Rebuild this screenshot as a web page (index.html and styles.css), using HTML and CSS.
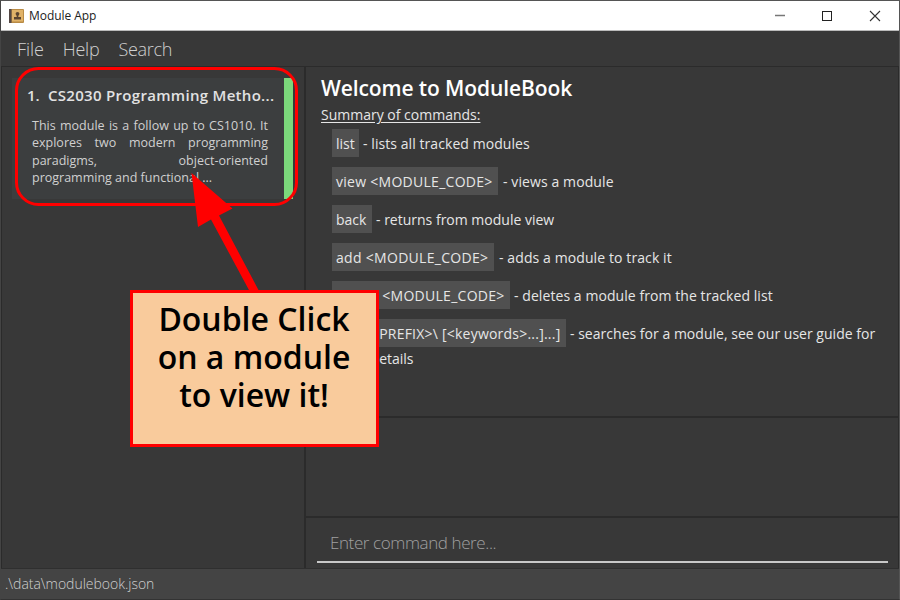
FILE: index.html
```html
<!DOCTYPE html>
<html lang="en">
<head>
<meta charset="utf-8">
<title>Module App</title>
<link rel="stylesheet" href="styles.css">
</head>
<body>
<div class="window">
  <header class="titlebar">
    <svg class="app-icon" width="15" height="14" viewBox="0 0 15 14">
      <rect width="15" height="14" rx="1" fill="#b98b45"/>
      <rect x="3" y="1" width="11" height="11.5" fill="#e0b268"/>
      <rect width="2.5" height="14" fill="#534744"/>
      <circle cx="8.500" cy="4.800" r="1.900" fill="#5b4430"/>
      <path d="M7.700 6h1.600v2H12v2.500H5V8h2.700z" fill="#5b4430"/>
    </svg>
    <span class="app-name">Module App</span>
    <svg class="controls" width="102" height="12" viewBox="0 0 102 12" fill="none">
      <path d="M0 5.500h10" stroke="#777" stroke-width="1.500"/>
      <rect x="47.500" y="1.500" width="9" height="9" stroke="#222"/>
      <path d="M95 1l10 10M105 1l-10 10" stroke="#333" stroke-width="1.100"/>
    </svg>
  </header>
  <nav class="menu"><span class="m-file">File</span><span class="m-help">Help</span><span class="m-search">Search</span></nav>
  <main class="content">
    <aside class="sidebar">
      <article class="card">
        <h2><span class="index">1.</span><span class="card-title">CS2030 Programming Metho...</span></h2>
        <div class="summary">
          <p>This module is a follow up to CS1010. It</p>
          <p>explores two modern programming</p>
          <p>paradigms, object-oriented</p>
          <p class="last">programming and functional ...</p>
        </div>
      </article>
    </aside>
    <section class="right">
      <div class="welcome">
        <h1><span>Welcome to ModuleBook</span></h1>
        <div class="subtitle"><span>Summary of commands:</span></div>
        <ul class="commands">
          <li><code class="c-list">list</code><span class="d-list">- lists all tracked modules</span></li>
          <li><code class="c-view">view &lt;MODULE_CODE&gt;</code><span class="d-view">- views a module</span></li>
          <li><code class="c-back">back</code><span class="d-back">- returns from module view</span></li>
          <li><code class="c-add">add &lt;MODULE_CODE&gt;</code><span class="d-add">- adds a module to track it</span></li>
          <li><code class="c-delete">delete &lt;MODULE_CODE&gt;</code><span class="d-delete">- deletes a module from the tracked list</span></li>
          <li><code class="c-find">find [&lt;PREFIX&gt;\ [&lt;keywords&gt;...]...]</code><span class="d-find">- searches for a module, see our user guide for</span></li>
        </ul>
        <div class="more"><span>more details</span></div>
      </div>
      <div class="result"></div>
      <div class="command"><div class="field"><span>Enter command here...</span></div></div>
    </section>
  </main>
  <footer class="status"><span>.\data\modulebook.json</span></footer>
  <svg class="annotation" width="900" height="600" viewBox="0 0 900 600">
    <rect x="16.500" y="68.500" width="280" height="136" rx="22" fill="none" stroke="#f00" stroke-width="3"/>
    <path d="M191.500 173L232.500 208.500L219 215.500L259 291H249.500L211 219.500L198 227Z" fill="#f00"/>
  </svg>
  <div class="callout"><span class="l1">Double Click</span><span class="l2">on a module</span><span class="l3">to view it!</span></div>
</div>
</body>
</html>
```
FILE: styles.css
```css
* { box-sizing: border-box; }
body { margin: 0; font-family: "Open Sans", "Noto Sans", sans-serif; }
h1, h2, p, ul { margin: 0; padding: 0; }
span, code { white-space: pre; }
.window { position: relative; width: 900px; height: 600px; overflow: hidden; display: flex; flex-direction: column; background: #383838; border: 1px solid #555; border-bottom-color: #333; border-left-color: #444; }
.titlebar { height: 30px; background: #fff; border-bottom: 1px solid #bbb; display: flex; align-items: center; padding: 0 18px 0 8px; }
.app-name { font-size: 12px; color: #222; margin-left: 5px; letter-spacing: -0.05px; }
.controls { margin-left: auto; overflow: visible; margin-right: 4px; }
.menu { height: 36px; border-bottom: 1px solid #2b2b2b; display: flex; align-items: center; padding: 0 0 0 16px; gap: 19px; font-size: 18px; font-weight: 300; color: #d0d0d0; }
.m-file { letter-spacing: -0.1px; }
.m-help { letter-spacing: -0.2px; }
.m-search { letter-spacing: -0.3px; }
.content { height: 501px; display: flex; }
.sidebar { width: 305px; padding: 11px 0 0 10px; border-left: 1px solid #2b2b2b; border-right: 2px solid #2b2b2b; }
.card { width: 281px; height: 121px; background: #3c3e3f; border-right: 9px solid #7bd87b; padding: 6px 0 0 15px; color: #e2e2e2; }
.card h2 { font-size: 15px; line-height: 22px; font-weight: 600; display: flex; }
.index { width: 21px; }
.card-title { letter-spacing: 0.3px; }
.summary { width: 236px; margin: 11px 0 0 5px; font-size: 12.5px; line-height: 17.3px; color: #d0d0d0; }
.summary p { text-align: justify; text-align-last: justify; white-space: nowrap; }
.summary .last { text-align-last: left; }
.right { flex: 1; display: flex; flex-direction: column; border-right: 1px solid #2b2b2b; }
.welcome { height: 351px; padding: 5px 0 0 15px; border-bottom: 2px solid #2b2b2b; color: #e6e6e6; }
.welcome h1 { font-size: 21px; line-height: 32px; font-weight: 600; color: #fff; letter-spacing: -0.1px; }
.subtitle { font-size: 14px; line-height: 22px; text-decoration: underline; text-underline-offset: 2px; }
.commands { list-style: none; margin: 2px 0 0 11px; padding-top: 1px; }
.commands li { height: 28px; margin-bottom: 10px; display: flex; align-items: flex-start; font-size: 14px; line-height: 30px; }
.commands code { font-family: inherit; height: 28px; background: #505050; padding-left: 4px; margin-right: 4px; }
.commands .c-list { width: 27px; }
.commands .c-view { width: 166px; letter-spacing: 0.28px; margin-right: 5px; }
.commands .c-back { width: 40px; }
.commands .c-add { width: 162px; letter-spacing: 0.3px; margin-right: 5px; }
.commands .c-delete { width: 178px; letter-spacing: 0.28px; }
.commands .c-find { width: 234px; letter-spacing: 0.22px; }
.d-view, .d-add { letter-spacing: 0.1px; }
.d-list, .d-delete { letter-spacing: 0.07px; }
.d-find { letter-spacing: 0.02px; }
.more { font-size: 14px; line-height: 20px; margin: -8px 0 0 11px; }
.result { height: 100px; border-bottom: 2px solid #2b2b2b; }
.command { height: 50px; padding: 7px 10px 0 11px; }
.field { height: 38px; border-bottom: 2px solid #c8c8c8; padding-left: 13px; font-size: 17px; line-height: 35px; font-weight: 300; color: #a0a0a0; letter-spacing: -0.4px; }
.status { height: 31px; background: #444; border-top: 1px solid #2f2f2f; padding-left: 4px; font-size: 14px; line-height: 30px; font-weight: 300; color: #d0d0d0; letter-spacing: -0.02px; }
.annotation { position: absolute; left: -1px; top: -1px; }
.callout { position: absolute; left: 129px; top: 289px; width: 249px; height: 157px; background: #f9cb9c; border: 3px solid #f00; padding: 7px 1px 0 0; display: flex; flex-direction: column; align-items: center; font-size: 32px; line-height: 38px; font-weight: 600; color: #000; }
```
